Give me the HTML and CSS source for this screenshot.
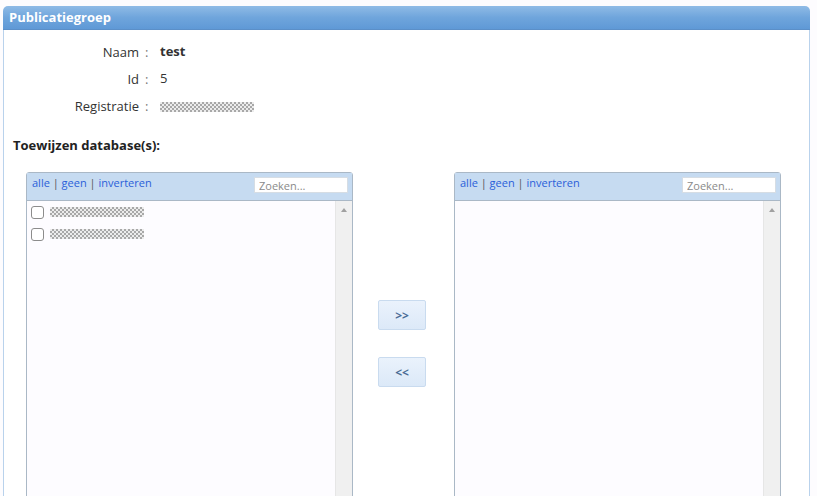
FILE: index.html
```html
<!DOCTYPE html>
<html lang="nl">
<head>
  <meta charset="UTF-8" />
  <title>Publicatiegroep</title>
  <link rel="stylesheet" href="styles.css">
</head>
<body>
  <div class="panel">
    <div class="panel-head">Publicatiegroep</div>
    <div class="panel-body">
      <div class="info">
        <span class="lbl">Naam</span><span class="sep">:</span><span class="val bold">test</span>
        <span class="lbl">Id</span><span class="sep">:</span><span class="val">5</span>
        <span class="lbl">Registratie</span><span class="sep">:</span><span class="val"><span class="redact"></span></span>
      </div>

      <h3 class="section">Toewijzen database(s):</h3>

      <div class="picker">
        <div class="listbox">
          <div class="listbox-head">
            <div class="links"><a href="#">alle</a> | <a href="#">geen</a> | <a href="#">inverteren</a></div>
            <input type="text" class="search" placeholder="Zoeken..." />
          </div>
          <div class="listbox-body">
            <div class="items">
              <label class="item"><input type="checkbox" /><span class="redact"></span></label>
              <label class="item"><input type="checkbox" /><span class="redact"></span></label>
            </div>
            <div class="scrollbar"><span class="arrow"></span></div>
          </div>
        </div>

        <div class="moves">
          <button class="move">&gt;&gt;</button>
          <button class="move">&lt;&lt;</button>
        </div>

        <div class="listbox">
          <div class="listbox-head">
            <div class="links"><a href="#">alle</a> | <a href="#">geen</a> | <a href="#">inverteren</a></div>
            <input type="text" class="search" placeholder="Zoeken..." />
          </div>
          <div class="listbox-body">
            <div class="items"></div>
            <div class="scrollbar"><span class="arrow"></span></div>
          </div>
        </div>
      </div>
    </div>
  </div>
</body>
</html>
```

FILE: styles.css
```css
html, body {
  margin: 0;
  padding: 0;
  height: 100%;
  overflow: hidden;
}

body {
  font-family: "Open Sans", "DejaVu Sans", sans-serif;
  font-size: 12px;
  color: #222;
  background: #fdfcfe;
}

.panel {
  margin: 6px 7px 0 3px;
}

.panel-head {
  height: 23px;
  line-height: 22px;
  padding-left: 6px;
  color: #fff;
  font-weight: bold;
  font-size: 13px;
  border-radius: 5px 5px 0 0;
  background: linear-gradient(#8fbbe6, #6fa5dc 50%, #5f99d6);
  border-bottom: 1px solid #5b8fc8;
}

.panel-body {
  background: #fff;
  border-left: 1px solid #b9d2ec;
  border-right: 1px solid #b9d2ec;
  height: 600px;
}

.info {
  display: grid;
  grid-template-columns: 135px 21px auto;
  grid-auto-rows: 27px;
  padding-top: 9px;
  font-size: 13px;
  color: #333;
}

.lbl {
  text-align: right;
  line-height: 27px;
}

.sep {
  padding-left: 6px;
  line-height: 27px;
  color: #777;
}

.val {
  line-height: 24px;
}

.bold {
  font-weight: bold;
}

.redact {
  display: inline-block;
  width: 94px;
  height: 10px;
  vertical-align: middle;
  background: repeating-conic-gradient(#a8a8a8 0 25%, #ececec 0 50%) 0 0 / 4px 4px;
}

.section {
  margin: 16px 0 0 9px;
  font-size: 13px;
  font-weight: bold;
  color: #222;
}

.picker {
  display: flex;
  align-items: flex-start;
  margin: 18px 0 0 22px;
}

.listbox {
  width: 325px;
  border: 1px solid #aab8c6;
  border-radius: 3px 3px 0 0;
  background: #fdfcff;
}

.listbox-head {
  display: flex;
  justify-content: space-between;
  height: 27px;
  padding: 0 4px 0 5px;
  background: #c6dbf1;
  border-bottom: 1px solid #aab8c6;
}

.links {
  font-size: 11px;
  line-height: 20px;
  color: #555;
}

.links a {
  color: #2b5fd9;
  text-decoration: none;
}

.search {
  width: 94px;
  height: 16px;
  box-sizing: border-box;
  margin-top: 4px;
  padding: 0 4px;
  border: 1px solid #d6dde4;
  font-family: inherit;
  font-size: 11px;
  color: #333;
}

.search::placeholder {
  color: #8a8a8a;
}

.listbox-body {
  display: flex;
  height: 320px;
}

.items {
  flex: 1;
  padding: 0 0 0 4px;
}

.item {
  display: flex;
  align-items: center;
  gap: 6px;
  height: 22px;
}

.item input {
  appearance: none;
  margin: 0;
  width: 13px;
  height: 13px;
  border: 1px solid #8c8c8c;
  border-radius: 3px;
  background: #fff;
}

.scrollbar {
  width: 16px;
  background: #f0f0f0;
  border-left: 1px solid #e6e6e6;
  position: relative;
}

.arrow {
  position: absolute;
  top: 7px;
  left: 5px;
  border-left: 3px solid transparent;
  border-right: 3px solid transparent;
  border-bottom: 4px solid #a0a0a0;
}

.moves {
  display: flex;
  flex-direction: column;
  gap: 27px;
  width: 48px;
  margin: 128px 28px 0 25px;
}

.move {
  width: 48px;
  height: 30px;
  border: 1px solid #c9dbef;
  border-radius: 2px;
  background: linear-gradient(#eaf2fc, #dce9f8);
  color: #4a6c95;
  font-family: inherit;
  font-size: 12px;
  font-weight: bold;
  cursor: pointer;
}
```
